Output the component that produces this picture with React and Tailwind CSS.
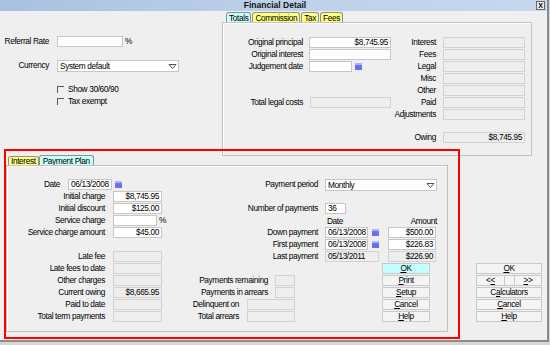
import React from "react";

const font = "font-['Liberation_Sans',Arial,sans-serif]";

function Field({ w, value, gray, left }) {
  return (
    <div
      className={`${w} h-[11px] border ${
        gray ? "bg-[#eeeeee] border-[#d2d2d2]" : "bg-white border-[#c6c6c6]"
      } flex items-center px-[2px] ${left ? "justify-start" : "justify-end"} leading-none whitespace-nowrap overflow-hidden`}
    >
      {value}
    </div>
  );
}

function Cal() {
  return <div className="w-[7px] h-[7px] mt-[2px] bg-[#6f6fe8] border-t-2 border-[#a8b8ff]" />;
}

function Select({ w, value }) {
  return (
    <div className={`${w} h-[12px] border border-[#c6c6c6] bg-white flex items-center leading-none`}>
      <span className="flex-1 pl-[2px]">{value}</span>
      <span className="w-[11px] h-[10px] flex items-center justify-center">
        <svg width="9" height="7" viewBox="0 0 9 7">
          <path d="M1 1.5h7L4.5 5.5z" fill="none" stroke="#555" strokeWidth="1" />
        </svg>
      </span>
    </div>
  );
}

function Row({ label, lw, gap = "ml-[8px]", children }) {
  return (
    <div className="flex items-start h-[12px]">
      <div className={`${lw} text-right leading-[11px] whitespace-nowrap`}>{label}</div>
      <div className={`${gap} flex items-start`}>{children}</div>
    </div>
  );
}

function Tab({ label, color }) {
  return (
    <div className={`${color} border border-b-0 border-[#8f8f8f] rounded-t-[3px] px-[2px] h-[10px] leading-[10px] mr-[1px]`}>
      {label}
    </div>
  );
}

function Btn({ children, cyan, w = "w-[48px]" }) {
  return (
    <div
      className={`${w} h-[11px] mb-[1px] border border-[#c9c9c9] ${
        cyan ? "bg-[#c4ffff]" : "bg-[#f4f4f4]"
      } flex items-center justify-center leading-none`}
    >
      {children}
    </div>
  );
}

function Check({ label }) {
  return (
    <div className="flex items-center h-[12px] pl-[57px]">
      <div className="w-[7px] h-[7px] border-t border-l border-[#5a5a5a]" />
      <span className="ml-[4px]">{label}</span>
    </div>
  );
}

export default function App() {
  return (
    <div className={`w-[550px] h-[345px] bg-[#d6d6d6] ${font} text-[8.3px] tracking-[-0.38px] leading-[11px] text-black relative overflow-hidden`}>
      <div className="w-[549px] h-[342px] bg-[#efefef] border-r-2 border-b-2 border-[#8c8c8c] flex flex-col">
        {/* Title bar */}
        <div className="h-[11px] bg-gradient-to-r from-[#a8c1df] via-[#bcd1e9] to-[#c4d8ee] flex items-center">
          <div className="w-[14px]" />
          <div className="flex-1 text-center font-bold text-[8.5px] tracking-normal leading-none text-[#111]">
            Financial Detail
          </div>
          <div className="w-[9px] h-[9px] mr-[2px] border border-[#666] bg-[#ececec] flex items-center justify-center text-[7px] tracking-normal font-bold leading-none">
            X
          </div>
        </div>

        {/* Top area */}
        <div className="h-[145px] flex">
          <div className="w-[222px] flex flex-col">
            <div className="mt-[25px]">
              <Row label="Referral Rate" lw="w-[49px]">
                <Field w="w-[66px]" value="" />
                <span className="ml-[2px] leading-[11px]">%</span>
              </Row>
            </div>
            <div className="mt-[12px]">
              <Row label="Currency" lw="w-[49px]">
                <Select w="w-[122px]" value="System default" />
              </Row>
            </div>
            <div className="mt-[11px]">
              <Check label="Show 30/60/90" />
              <Check label="Tax exempt" />
            </div>
          </div>

          <div className="w-[310px] flex flex-col">
            <div className="flex h-[11px] pt-[1px] pl-[4px]">
              <Tab label="Totals" color="bg-[#c8ffff]" />
              <Tab label="Commission" color="bg-[#ffff80]" />
              <Tab label="Tax" color="bg-[#ffff80]" />
              <Tab label="Fees" color="bg-[#ffff80]" />
            </div>
            <div className="h-[134px] border border-[#c2c2c2] shadow-[inset_1px_1px_0_#ffffff] pt-[14px] flex">
              <div className="w-[168px] flex flex-col">
                <Row label="Original principal" lw="w-[80px]" gap="ml-[6px]">
                  <Field w="w-[82px]" value="$8,745.95" />
                </Row>
                <Row label="Original interest" lw="w-[80px]" gap="ml-[6px]">
                  <Field w="w-[82px]" value="" />
                </Row>
                <Row label="Judgement date" lw="w-[80px]" gap="ml-[6px]">
                  <Field w="w-[43px]" value="" />
                  <div className="ml-[3px]">
                    <Cal />
                  </div>
                </Row>
                <div className="h-[24px]" />
                <Row label="Total legal costs" lw="w-[80px]" gap="ml-[7px]">
                  <Field w="w-[81px]" value="" gray />
                </Row>
              </div>
              <div className="flex flex-col">
                {["Interest", "Fees", "Legal", "Misc", "Other", "Paid", "Adjustments"].map((l) => (
                  <Row key={l} label={l} lw="w-[45px]" gap="ml-[7px]">
                    <Field w="w-[82px]" value="" gray />
                  </Row>
                ))}
                <div className="mt-[11px]">
                  <Row label="Owing" lw="w-[45px]" gap="ml-[7px]">
                    <Field w="w-[82px]" value="$8,745.95" gray />
                  </Row>
                </div>
              </div>
            </div>
          </div>
        </div>

        {/* Lower area */}
        <div className="flex">
          <div className="ml-[6px] w-[442px] flex flex-col">
            <div className="flex h-[9px] pl-[2px]">
              <div className="bg-[#ffff80] border border-b-0 border-[#8f8f8f] rounded-t-[3px] px-[2px] h-[9px] leading-[9px]">
                Interest
              </div>
              <div className="bg-[#c8ffff] border border-b-0 border-[#8f8f8f] rounded-t-[3px] px-[3px] h-[10px] -mt-[1px] leading-[10px]">
                Payment Plan
              </div>
            </div>
            <div className="h-[167px] border border-[#c2c2c2] shadow-[inset_1px_1px_0_#ffffff] pt-[13px]">
              {/* upper rows */}
              <div className="flex">
                <div className="w-[163px] flex flex-col">
                  <Row label="Date" lw="w-[53px]">
                    <Field w="w-[44px]" value="06/13/2008" left />
                    <div className="ml-[3px]">
                      <Cal />
                    </div>
                  </Row>
                  <Row label="Initial charge" lw="w-[98px]">
                    <Field w="w-[49px]" value="$8,745.95" />
                  </Row>
                  <Row label="Initial discount" lw="w-[98px]">
                    <Field w="w-[49px]" value="$125.00" />
                  </Row>
                  <Row label="Service charge" lw="w-[98px]">
                    <Field w="w-[44px]" value="" />
                    <span className="ml-[2px] leading-[11px]">%</span>
                  </Row>
                  <Row label="Service charge amount" lw="w-[98px]">
                    <Field w="w-[49px]" value="$45.00" />
                  </Row>
                  <div className="h-[12px]" />
                  <Row label="Late fee" lw="w-[98px]">
                    <Field w="w-[49px]" value="" gray />
                  </Row>
                </div>
                <div className="flex flex-col">
                  <Row label="Payment period" lw="w-[148px]" gap="ml-[7px]">
                    <Select w="w-[112px]" value="Monthly" />
                  </Row>
                  <div className="h-[12px]" />
                  <Row label="Number of payments" lw="w-[148px]" gap="ml-[7px]">
                    <Field w="w-[21px]" value="36" left />
                  </Row>
                  <div className="flex h-[12px] pl-[157px] w-[267px] justify-between leading-[12px]">
                    <span>Date</span>
                    <span>Amount</span>
                  </div>
                  <Row label="Down payment" lw="w-[148px]" gap="ml-[7px]">
                    <Field w="w-[43px]" value="06/13/2008" left />
                    <div className="ml-[4px]">
                      <Cal />
                    </div>
                    <div className="ml-[9px]">
                      <Field w="w-[48px]" value="$500.00" />
                    </div>
                  </Row>
                  <Row label="First payment" lw="w-[148px]" gap="ml-[7px]">
                    <Field w="w-[43px]" value="06/13/2008" left />
                    <div className="ml-[4px]">
                      <Cal />
                    </div>
                    <div className="ml-[9px]">
                      <Field w="w-[48px]" value="$226.83" />
                    </div>
                  </Row>
                  <Row label="Last payment" lw="w-[148px]" gap="ml-[7px]">
                    <Field w="w-[54px]" value="05/13/2011" gray left />
                    <div className="ml-[9px]">
                      <Field w="w-[48px]" value="$226.90" gray />
                    </div>
                  </Row>
                </div>
              </div>

              {/* lower rows */}
              <div className="flex">
                <div className="w-[163px] flex flex-col">
                  {["Late fees to date", "Other charges", "Current owing", "Paid to date", "Total term payments"].map((l) => (
                    <Row key={l} label={l} lw="w-[98px]">
                      <Field w="w-[49px]" value={l === "Current owing" ? "$8,665.95" : ""} gray />
                    </Row>
                  ))}
                </div>
                <div className="w-[125px] flex flex-col">
                  <div className="h-[12px]" />
                  {[
                    ["Payments remaining", "w-[20px]"],
                    ["Payments in arrears", "w-[20px]"],
                    ["Delinquent on", "w-[48px]"],
                    ["Total arrears", "w-[48px]"],
                  ].map(([l, w]) => (
                    <div key={l} className="flex justify-end items-start h-[12px]">
                      <span className="leading-[11px] whitespace-nowrap">{l}</span>
                      <div className={w === "w-[20px]" ? "ml-[7px]" : "ml-[8px]"}>
                        <Field w={w} value="" gray />
                      </div>
                    </div>
                  ))}
                </div>
                <div className="ml-[87px] flex flex-col">
                  <Btn cyan>
                    <span className="underline">O</span>K
                  </Btn>
                  <Btn>
                    <span className="underline">P</span>rint
                  </Btn>
                  <Btn>
                    <span className="underline">S</span>etup
                  </Btn>
                  <Btn>
                    <span className="underline">C</span>ancel
                  </Btn>
                  <Btn>
                    <span className="underline">H</span>elp
                  </Btn>
                </div>
              </div>
            </div>
          </div>

          {/* Right buttons */}
          <div className="ml-[28px] w-[66px] mt-[107px] flex flex-col">
            <Btn w="w-[66px]">
              <span className="underline">O</span>K
            </Btn>
            <div className="flex h-[11px] mb-[1px] border border-[#c9c9c9] bg-[#f4f4f4] leading-none">
              <div className="w-[28px] border-r border-[#c9c9c9] flex items-center justify-center">
                &lt;<span className="underline">&lt;</span>
              </div>
              <div className="flex-1" />
              <div className="w-[27px] border-l border-[#c9c9c9] flex items-center justify-center">
                <span className="underline">&gt;</span>&gt;
              </div>
            </div>
            <Btn w="w-[66px]">
              C<span className="underline">a</span>lculators
            </Btn>
            <Btn w="w-[66px]">
              <span className="underline">C</span>ancel
            </Btn>
            <Btn w="w-[66px]">
              <span className="underline">H</span>elp
            </Btn>
          </div>
        </div>
      </div>

      {/* red annotation frame */}
      <div className="absolute left-[4px] top-[149px] w-[456px] h-[190px] border-2 border-[#ff0000] pointer-events-none" />
    </div>
  );
}
